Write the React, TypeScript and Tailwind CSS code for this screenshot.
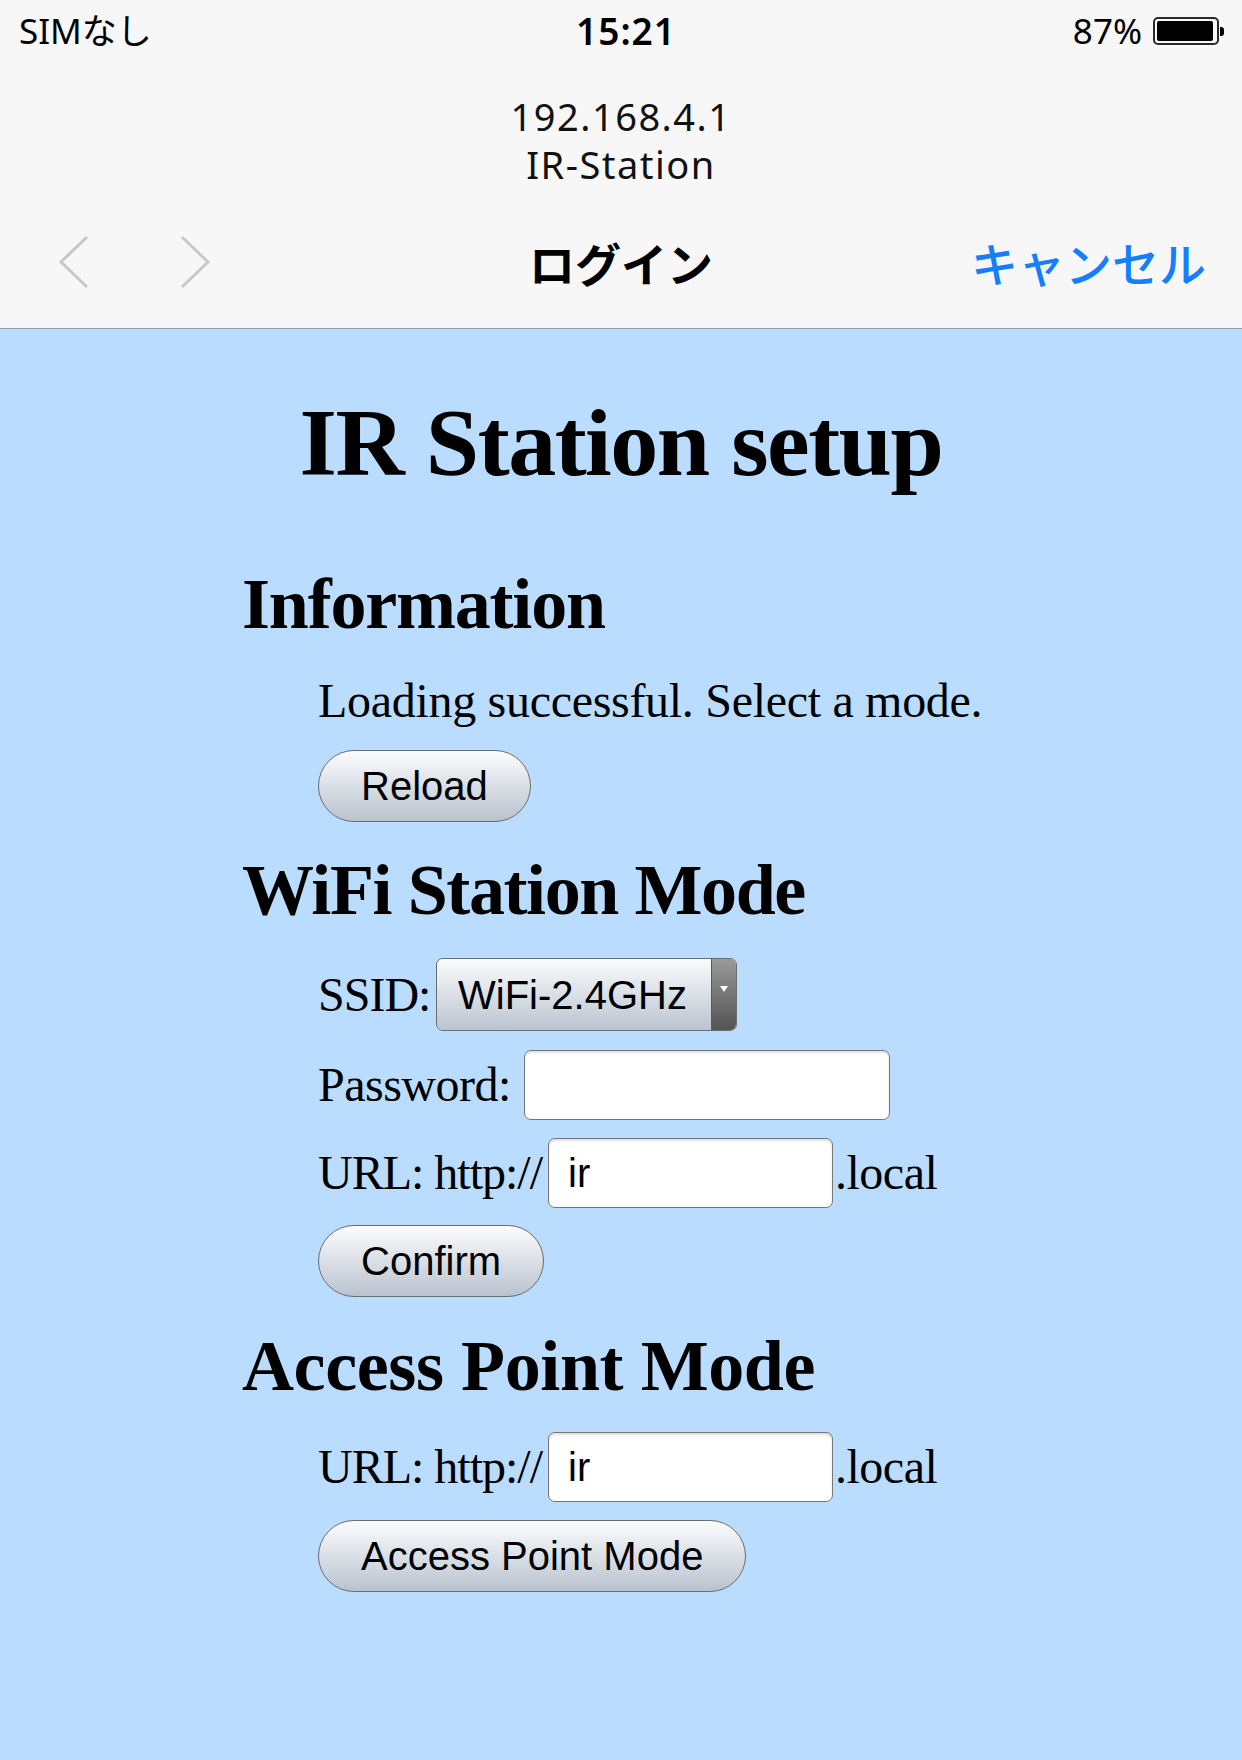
const sans = { fontFamily: '"Noto Sans", "Noto Sans CJK JP", sans-serif' };

function Chevron({ dir }: { dir: 'left' | 'right' }) {
  const points = dir === 'left' ? '29,2 3,27 29,52' : '3,2 29,27 3,52';
  return (
    <svg width="32" height="54" viewBox="0 0 32 54" className="block">
      <polyline points={points} fill="none" stroke="#c8c8c8" strokeWidth="3" />
    </svg>
  );
}

function Battery() {
  return (
    <div className="flex items-center">
      <div className="h-[28px] w-[66px] rounded-[5px] border-2 border-[#2a2a2a] p-[2px]">
        <div className="h-full w-[56px] rounded-[2px] bg-black" />
      </div>
      <div className="ml-[1px] h-[9px] w-[4px] rounded-r-[3px] bg-black" />
    </div>
  );
}

function PillButton({ label, mt }: { label: string; mt: string }) {
  return (
    <button
      type="button"
      className={`${mt} flex h-[72px] items-center rounded-full border-[1.5px] border-[#6c6c6c] bg-gradient-to-b from-[#fdfdfe] to-[#b9c3cf] px-[42px] font-['Liberation_Sans',Arial,sans-serif] text-[40px] leading-none text-black`}
    >
      {label}
    </button>
  );
}

function TextBox({ value, width }: { value: string; width: string }) {
  return (
    <input
      readOnly
      value={value}
      className={`h-[70px] ${width} rounded-[7px] border-[1.5px] border-[#767676] bg-white px-[19px] font-['Liberation_Sans',Arial,sans-serif] text-[40px] text-black shadow-[inset_0_2px_2px_rgba(0,0,0,0.12)] outline-none`}
    />
  );
}

function UrlRow({ mt }: { mt: string }) {
  return (
    <div className={`${mt} flex h-[70px] items-center`}>
      <span className="w-[230px] whitespace-nowrap tracking-[-1px]">URL: http://</span>
      <TextBox value="ir" width="w-[285px]" />
      <span className="ml-[2px] tracking-[-0.5px]">.local</span>
    </div>
  );
}

export default function App() {
  return (
    <div className="min-h-screen bg-[#badcfe]">
      <header className="border-b border-[#8e99a5] bg-[#f7f7f8]" style={sans}>
        <div className="grid h-[62px] grid-cols-3 items-center text-[35px] text-black">
          <div className="pl-[19px]">SIMなし</div>
          <div className="pl-[10px] text-center text-[37px] font-semibold tracking-[1px]">15:21</div>
          <div className="flex items-center justify-end gap-[11px] pr-[18px]">
            <span>87%</span>
            <Battery />
          </div>
        </div>
        <div className="pt-[30px] text-center text-[38px] leading-[48px] tracking-[1.5px] text-[#111]">
          <div>192.168.4.1</div>
          <div>IR-Station</div>
        </div>
        <div className="grid h-[140px] grid-cols-3 items-center pt-[8px]">
          <div className="flex items-center gap-[89px] pl-[58px]">
            <Chevron dir="left" />
            <Chevron dir="right" />
          </div>
          <div className="text-center text-[46px] font-semibold text-black" style={{ fontFamily: '"Noto Sans CJK JP", sans-serif' }}>
            ログイン
          </div>
          <div className="pr-[36px] text-right text-[47px] font-medium text-[#147efb]" style={{ fontFamily: '"Noto Sans CJK JP", sans-serif' }}>
            キャンセル
          </div>
        </div>
      </header>

      <main className="pb-[160px] pt-[66px] font-['Liberation_Serif','Times_New_Roman',serif] text-black">
        <h1 className="text-center text-[96px] font-bold leading-none tracking-[-1.5px]">IR Station setup</h1>

        <h2 className="ml-[242px] mt-[77px] text-[72px] font-bold leading-none tracking-[-1.2px]">Information</h2>
        <div className="ml-[318px]">
          <p className="mt-[37px] text-[48px] leading-[48px] tracking-[-0.3px]">Loading successful. Select a mode.</p>
          <PillButton label="Reload" mt="mt-[25px]" />
        </div>

        <h2 className="ml-[242px] mt-[32px] text-[72px] font-bold leading-none tracking-[-1.4px]">WiFi Station Mode</h2>
        <div className="ml-[318px] text-[48px] leading-[48px]">
          <div className="mt-[32px] flex h-[73px] items-center">
            <span className="w-[118px] whitespace-nowrap tracking-[-1px]">SSID:</span>
            <div className="flex h-[73px] w-[301px] overflow-hidden rounded-[7px] border-[1.5px] border-[#6c6c6c] font-['Liberation_Sans',Arial,sans-serif]">
              <div className="flex flex-1 items-center bg-gradient-to-b from-[#fbfcfd] to-[#bac4d0] pl-[21px] text-[40px] leading-none">
                WiFi-2.4GHz
              </div>
              <div className="flex w-[25px] items-start justify-center border-l border-[#5a5a5a] bg-gradient-to-b from-[#9a9a9a] to-[#545454] pt-[27px]">
                <div className="h-0 w-0 border-x-[4px] border-t-[6px] border-x-transparent border-t-white" />
              </div>
            </div>
          </div>
          <div className="mt-[19px] flex h-[70px] items-center">
            <span className="w-[206px] whitespace-nowrap tracking-[-0.5px]">Password:</span>
            <TextBox value="" width="w-[366px]" />
          </div>
          <UrlRow mt="mt-[18px]" />
          <PillButton label="Confirm" mt="mt-[17px]" />
        </div>

        <h2 className="ml-[242px] mt-[33px] text-[72px] font-bold leading-none tracking-[-0.4px]">Access Point Mode</h2>
        <div className="ml-[318px] text-[48px] leading-[48px]">
          <UrlRow mt="mt-[30px]" />
          <PillButton label="Access Point Mode" mt="mt-[18px]" />
        </div>
      </main>
    </div>
  );
}
